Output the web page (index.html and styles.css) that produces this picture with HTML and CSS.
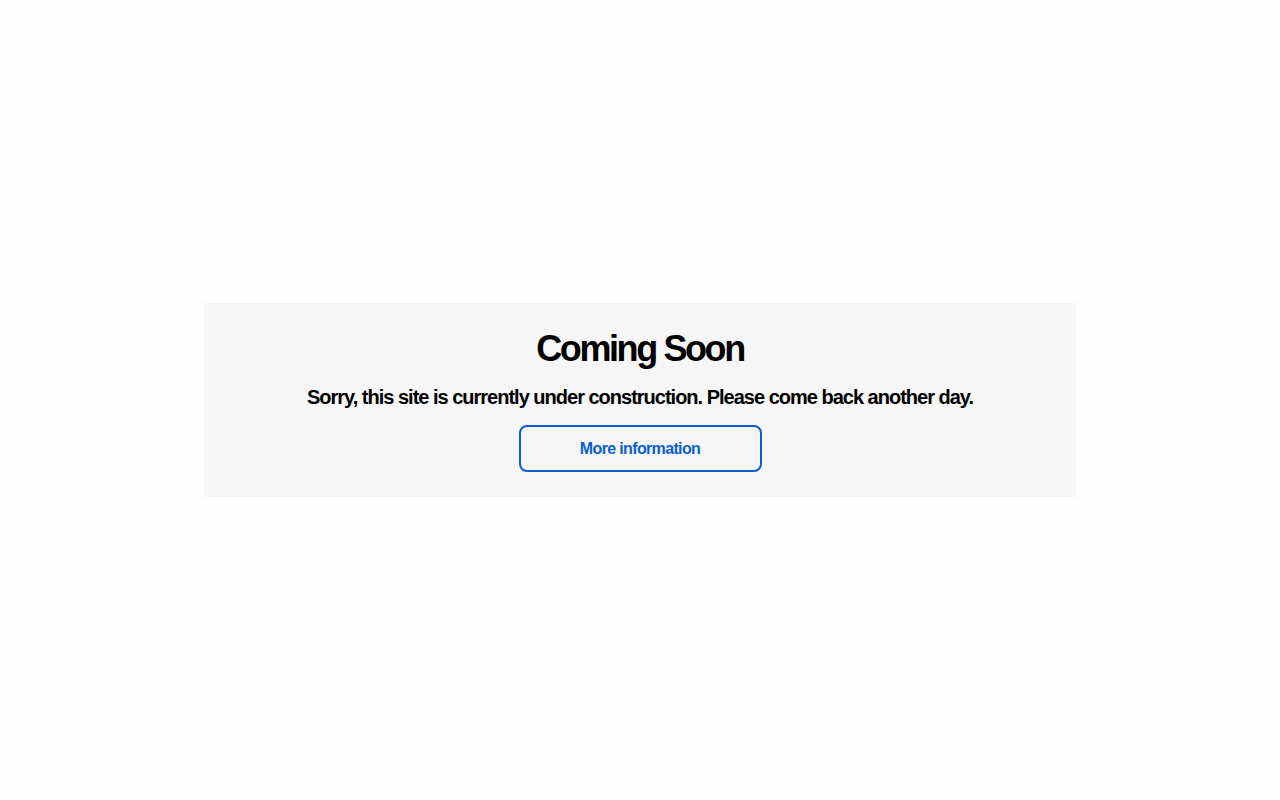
FILE: index.html
```html
<!DOCTYPE html>
<html lang="en">
<head>
<meta charset="utf-8">
<title>Coming Soon</title>
<link rel="stylesheet" href="styles.css">
</head>
<body>
<main class="page">
  <section class="panel">
    <h1 class="title">Coming Soon</h1>
    <p class="subtitle">Sorry, this site is currently under construction. Please come back another day.</p>
    <a class="btn" href="#">More information</a>
  </section>
</main>
</body>
</html>
```

FILE: styles.css
```css
html, body {
  margin: 0;
  padding: 0;
  background: #fefefe;
  font-family: "Liberation Sans", Arial, sans-serif;
  color: #000;
}
.page {
  min-height: 100vh;
  display: flex;
  align-items: center;
  justify-content: center;
}
.panel {
  width: 872px;
  box-sizing: border-box;
  background: #f6f6f6;
  padding: 24px 0 25px;
  display: flex;
  flex-direction: column;
  align-items: center;
}
.title {
  margin: 0;
  font-size: 36px;
  line-height: 44px;
  font-weight: 700;
  letter-spacing: -2.4px;
}
.subtitle {
  margin: 14px 0 0;
  font-size: 20px;
  line-height: 24px;
  font-weight: 700;
  letter-spacing: -1px;
}
.btn {
  margin-top: 16px;
  width: 243px;
  height: 47px;
  box-sizing: border-box;
  border: 2px solid #0a5fd0;
  border-radius: 8px;
  display: flex;
  align-items: center;
  justify-content: center;
  color: #0a5fd0;
  font-size: 16px;
  font-weight: 700;
  letter-spacing: -0.65px;
  text-decoration: none;
}
```
